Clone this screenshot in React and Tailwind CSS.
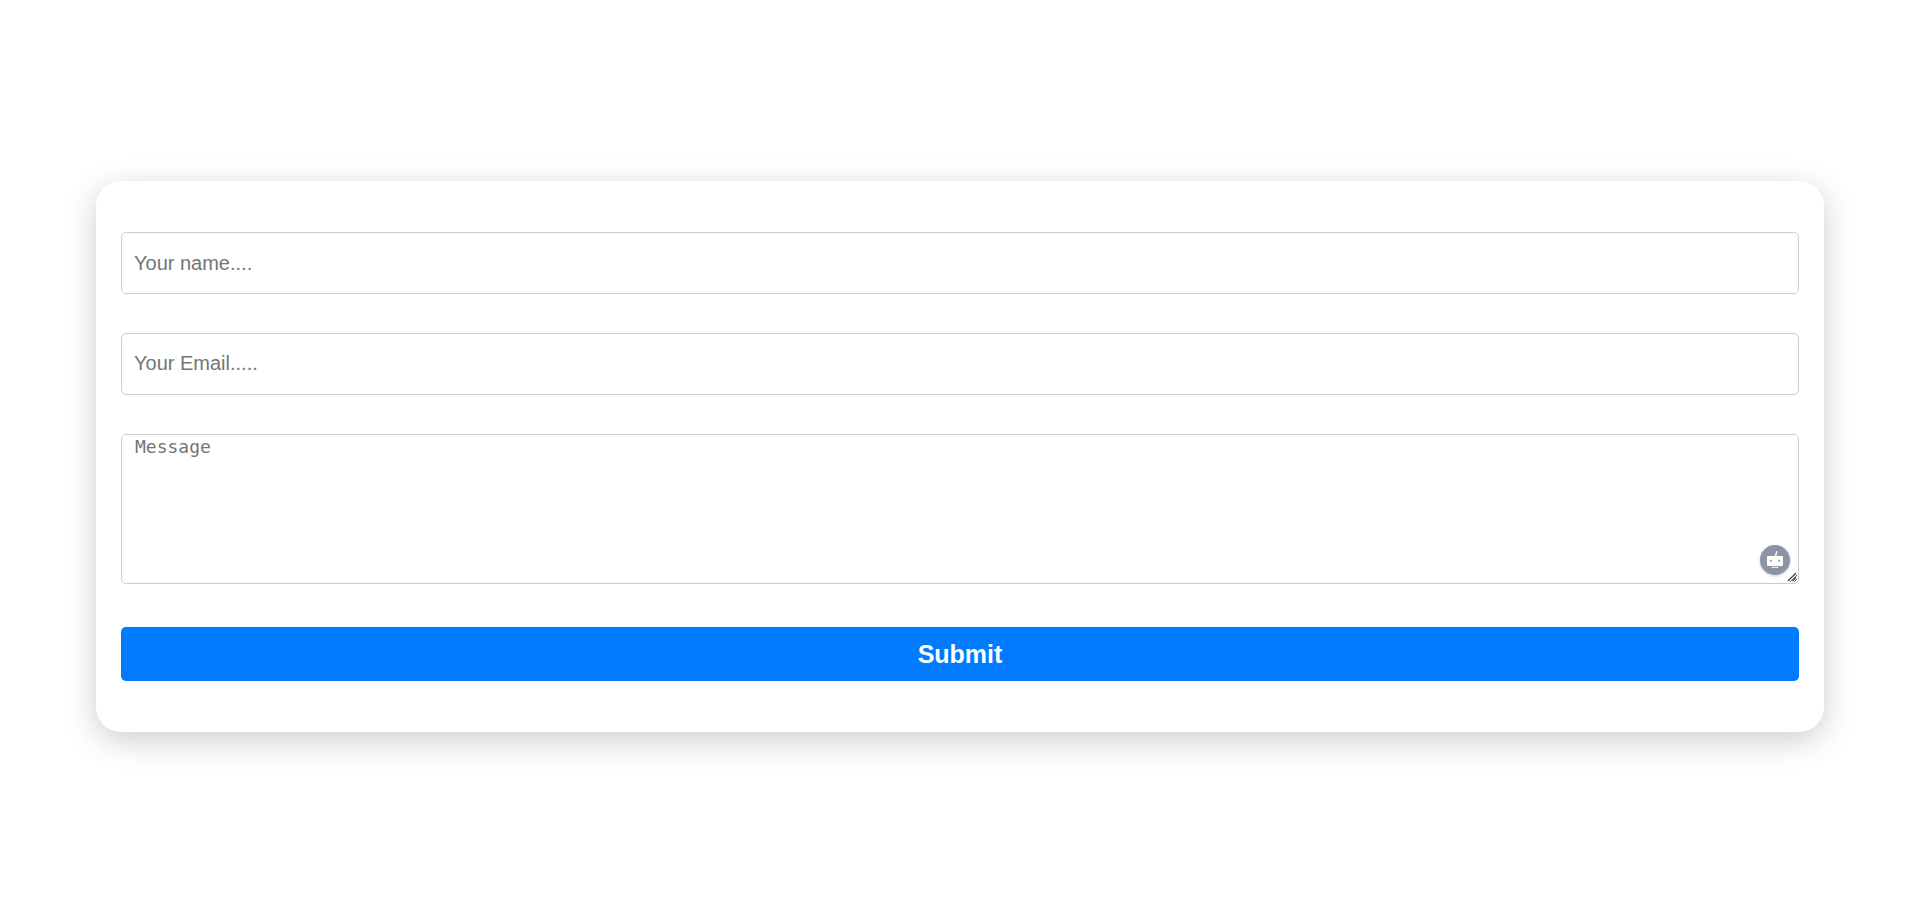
export default function App() {
  return (
    <div className="min-h-screen bg-white pt-[181px] font-['Liberation_Sans',Arial,sans-serif]">
      <form className="ml-[96px] mr-[89px] rounded-[25px] bg-white px-[25px] pt-[51px] pb-[51px] shadow-[0_8px_32px_rgba(0,0,0,0.2)]">
        <input
          type="text"
          placeholder="Your name...."
          className="block h-[62px] w-full rounded-[5px] border border-[#ccc] px-[12px] text-[20px] outline-none placeholder:text-[#757575]"
        />
        <input
          type="email"
          placeholder="Your Email....."
          className="mt-[39px] block h-[62px] w-full rounded-[5px] border border-[#ccc] px-[12px] pb-[2px] text-[20px] outline-none placeholder:text-[#757575]"
        />
        <div className="relative mt-[39px]">
          <textarea
            placeholder="Message"
            className="block h-[150px] w-full rounded-[5px] border border-[#ccc] px-[13px] pt-[1px] font-['DejaVu_Sans_Mono',monospace] text-[18px] leading-[21px] outline-none placeholder:text-[#757575]"
          />
          <div className="absolute right-[9px] bottom-[9px] flex h-[30px] w-[30px] items-center justify-center rounded-full bg-[#8a94a6] shadow-[0_1px_3px_rgba(0,0,0,0.2)]">
            <svg width="20" height="20" viewBox="0 0 20 20" fill="white">
              <path d="M9.6 6l1.8-5 1.2.5L11.2 6z" />
              <rect x="2" y="6" width="16" height="10" rx="1" />
              <rect x="6.7" y="16.8" width="6.6" height="1" />
              <circle cx="5.8" cy="10.8" r="1" fill="#8a94a6" />
              <circle cx="14.2" cy="10.8" r="1" fill="#8a94a6" />
            </svg>
          </div>
          <svg className="pointer-events-none absolute right-[2px] bottom-[2px]" width="10" height="10" viewBox="0 0 10 10" stroke="#444" strokeWidth="1.3">
            <path d="M1 9L9 1M5.5 9L9 5.5" />
          </svg>
        </div>
        <button
          type="button"
          className="mt-[43px] block h-[54px] w-full rounded-[5px] bg-[#007bff] pt-[2px] text-[25px] font-bold text-white"
        >
          Submit
        </button>
      </form>
    </div>
  );
}
